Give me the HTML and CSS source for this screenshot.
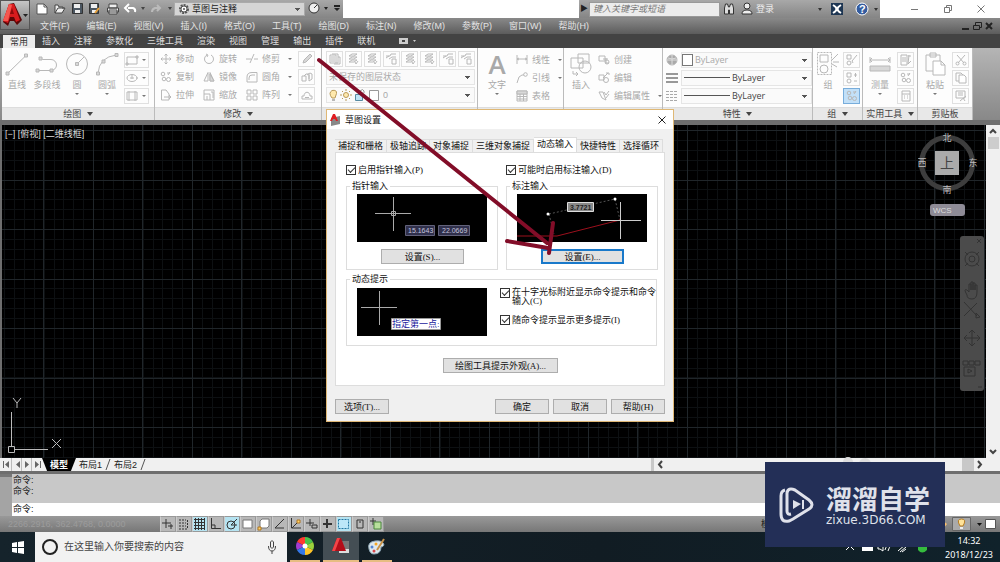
FILE: index.html
```html
<!DOCTYPE html>
<html lang="zh-CN">
<head>
<meta charset="utf-8">
<title>草图设置</title>
<link rel="stylesheet" href="styles.css">
</head>
<body>
<svg class="sprite" aria-hidden="true">
  <symbol id="line" viewBox="0 0 24 24"><path d="M2.500 21.500L21 3.500"/><path class="node" d="M1 20h3v3H1zM19.500 2h3v3h-3z"/></symbol>
  <symbol id="pline" viewBox="0 0 24 24"><path d="M3 18.500H16a5.500 5.500 0 0 0 0-11H8L5 6"/><path class="node" d="M1 17h3v3H1zM15 17h3v3h-3zM4 5h3v3H4z"/></symbol>
  <symbol id="circle" viewBox="0 0 24 24"><circle cx="12" cy="12" r="10.500"/><path d="M12 12l7-7"/><path class="node" d="M10.500 10.500h3v3h-3z"/></symbol>
  <symbol id="arc" viewBox="0 0 24 24"><path d="M3 21.500Q4 5 21.500 3"/><path class="node" d="M1.500 20h3v3h-3zM7 8h3v3H7zM20 1.500h3v3h-3z"/></symbol>
  <symbol id="rect" viewBox="0 0 14 12"><path d="M2 3h10v7H2z"/><path class="node" d="M1 9h2v2H1zM11 2h2v2h-2z"/></symbol>
  <symbol id="ellipse" viewBox="0 0 14 12"><ellipse cx="7" cy="6" rx="5" ry="3.500"/><path d="M7 3v4M5 6h4M12 5v2"/></symbol>
  <symbol id="hatch" viewBox="0 0 14 12"><path d="M2 2h10v8H2zM4 1v10M10 1v10"/></symbol>
  <symbol id="move" viewBox="0 0 12 12"><path d="M6 1v10M1 6h10M4.500 2.500L6 1l1.500 1.500M4.500 9.500L6 11l1.500-1.500M2.500 4.500L1 6l1.500 1.500M9.500 4.500L11 6 9.500 7.500"/></symbol>
  <symbol id="rotate" viewBox="0 0 12 12"><path d="M4 2a4.500 4.500 0 1 0 4 0M3 1l2 1-1 2"/></symbol>
  <symbol id="trim" viewBox="0 0 12 12"><path d="M0 6h5M8 6h4M8 1L4 10"/></symbol>
  <symbol id="copy" viewBox="0 0 12 12"><circle cx="3" cy="3" r="1.800"/><circle cx="8.500" cy="8.500" r="2"/><circle cx="4" cy="8" r="1.800"/><path d="M7 2l3 0M8 4l2-3"/></symbol>
  <symbol id="mirror" viewBox="0 0 12 12"><path d="M5 1.500V10H1zM7 1.500V10h4z"/><path class="node" d="M7 3v7h4z"/></symbol>
  <symbol id="fillet" viewBox="0 0 12 12"><path d="M1 11V6q0-4.500 5-4.500h5V11z"/><path d="M3 9V7q0-3 3-3h3"/></symbol>
  <symbol id="stretch" viewBox="0 0 12 12"><path d="M1.500 1h4.500l3 4v6H1.500zM4 8h7M9 6l2 2-2 2"/></symbol>
  <symbol id="scale" viewBox="0 0 12 12"><path d="M1 1h10v10H1zM1 5h6v6M4 7v4M8 3h2v6"/></symbol>
  <symbol id="array" viewBox="0 0 12 12"><path d="M1 1h4v4H1zM7 1h4v4H7zM1 7h4v4H1zM7 7h4v4H7z"/></symbol>
  <symbol id="erase" viewBox="0 0 12 12"><path class="node" d="M2 10l1-3 6-6 2 2-6 6-3 1z"/></symbol>
  <symbol id="explode" viewBox="0 0 12 12"><path d="M1 5h4v5H1zM6 4l3-2 2 1v5L8 10M3 5l2-2h3v5M8 4v6"/></symbol>
  <symbol id="offset" viewBox="0 0 12 12"><path d="M1 10V7h2c0-5 6-5 6 0h2v3zM4 8.500h4"/></symbol>
  <symbol id="layers" viewBox="0 0 12 12"><path d="M1 2h6v8H1zM3 1h6v9H7M2 4h4M2 6h4M2 8h4M9 4h2v7H5"/></symbol>
  <symbol id="layerb" viewBox="0 0 12 12"><path d="M2 3l3-2h5L7 3zM2 6l3-2h5L7 6zM2 9l3-2h5L7 9zM8 9l1 2 2-3"/></symbol>
  <symbol id="layerc" viewBox="0 0 12 12"><path d="M1 3h4l1-2h5M4 6l3-2h4M7 6v5h4V6zM1 5l3-2"/></symbol>
  <symbol id="dim" viewBox="0 0 12 12"><path d="M1 1v9M11 1v9M1 5h10M3 4L1 5l2 1M9 4l2 1-2 1"/></symbol>
  <symbol id="leader" viewBox="0 0 12 12"><path d="M1 11L3 5l3-2h2"/><circle cx="9.500" cy="2.500" r="1.800"/></symbol>
  <symbol id="table" viewBox="0 0 12 12"><path d="M1 1h10v10H1zM1 4h10M1 6.500h10M1 9h10M4 4v7M7.500 4v7"/><path class="node" d="M1 1h10v3H1z"/></symbol>
  <symbol id="insert" viewBox="0 0 24 24"><path d="M2 6h12v10H2zM9 2h11v9H9z"/><circle cx="16" cy="15" r="6"/><path d="M4 19v3h5M7 20l2 2-2 2"/></symbol>
  <symbol id="create" viewBox="0 0 12 12"><path d="M1 2h6v5H1zM5 5h5M8 9V4M7 9h4"/><circle cx="9" cy="8" r="2"/></symbol>
  <symbol id="edit" viewBox="0 0 12 12"><path d="M1 3h5v5H1zM5 6l5-5M8 1h3v2"/><circle cx="8" cy="8" r="2.500"/></symbol>
  <symbol id="attr" viewBox="0 0 12 12"><path d="M1 2h4l3 8-4-2zM6 2l2 3 3-4M8 8l3-4"/></symbol>
  <symbol id="group" viewBox="0 0 24 26"><path stroke-dasharray="2 1" d="M1.500 1.500h14v22h-14z"/><path d="M4 4h8v7H4zM16 9l6-6M17 11h6M16 13l5 3"/><circle cx="8" cy="18" r="4"/></symbol>
  <symbol id="grpedit" viewBox="0 0 12 12"><path d="M1 1h4v4H1zM6 7l5-6M6 7l1 2"/><circle cx="3" cy="9" r="2"/></symbol>
  <symbol id="grpadd" viewBox="0 0 12 12"><path d="M1 1h4v4H1zM8 3h3M9.500 1v4M8 9h3"/><circle cx="3" cy="9" r="2"/></symbol>
  <symbol id="measure" viewBox="0 0 24 24"><path d="M2 5v6M22 5v6M2 8h20M4 6L2 8l2 2M20 6l2 2-2 2"/><path class="node" d="M2 14h20v5H2z"/></symbol>
  <symbol id="select" viewBox="0 0 12 12"><path d="M1 1h6v10H1zM3 3v5M5 3v5M8 2h3M9 1l-1 9 3-3"/></symbol>
  <symbol id="calc" viewBox="0 0 12 12"><path d="M2 1h8v10H2zM2 4h8M4 6h1M7 6h1M4 8h1M7 8h1"/></symbol>
  <symbol id="paste" viewBox="0 0 24 24"><path d="M3 3h14v16H3zM7 1h6v4H7z"/><path class="paper" d="M10 9h8l4 4v10H10z"/><path d="M18 9v4h4"/></symbol>
  <symbol id="cut" viewBox="0 0 12 12"><path d="M2 1l7 8M10 1L3 9M6 5"/><circle cx="2.500" cy="9.500" r="1.500"/><circle cx="9.500" cy="9.500" r="1.500"/></symbol>
  <symbol id="pages" viewBox="0 0 12 12"><path d="M1 1h5l2 2v6H1z"/><path class="paper" d="M4 3h5l2 2v6H4z"/></symbol>
  <symbol id="match" viewBox="0 0 12 12"><path d="M1 1h9v7H1zM3 3h5M3 5h5M5 11l6-5M8 8l2 3"/></symbol>
</svg>

<div class="app">
  <header class="header">
    <button class="app-button" aria-label="应用程序菜单">
      <svg width="28" height="28" viewBox="0 0 28 28"><path fill="#5d0707" d="M2 21L8 3l5-1 8 17-5 5-3-4H9l-2 5z"/><path fill="#d81b1e" d="M2 20L8 3h5l6 16-4 2-2-5H9l-2 6z"/><path fill="#f5564e" d="M2 20L8 3l3 1-4 16z"/><path fill="#8f0b0d" d="M9 13l2-6 2 6z"/><path fill="#222" d="M22 13h5l-2.500 3z"/></svg>
    </button>
    <div class="titlebar">
      <div class="quick">
        <svg class="quick-icons" width="144" height="18" viewBox="0 0 144 18" aria-hidden="true">
          <path fill="#fff" stroke="#555" d="M7 4h7l3 3v7H7z"/><path fill="none" stroke="#555" d="M14 4v3h3"/>
          <path fill="#eee" stroke="#444" d="M25 13V5h3l1 2h4v2M25 13l3-5h7l-3 5z"/>
          <path fill="#4b5661" stroke="#333" d="M42.500 3.500h10v10h-10z"/><path fill="#eee" d="M44 4h6v4h-6zM45 10h5v3h-5z"/>
          <path fill="#4b5661" stroke="#333" d="M59.500 3.500h9v10h-9z"/><path fill="#eee" d="M61 4h6v4h-6zM62 10h4v3h-4z"/><path stroke="#e8a13a" stroke-width="2" d="M65 13l4-5"/>
          <path fill="#eee" stroke="#444" d="M79 4h8v4h-8zM77.500 8h11v4h-11zM79 10h8v4h-8z"/>
          <path fill="none" stroke="#fff" stroke-width="2" d="M98 8h5q3 1 2 4M99 4l-4 4 4 4"/>
          <path fill="#444" d="M111 7h4l-2 3z"/>
          <path fill="none" stroke="#bbb" stroke-width="2" d="M129 8h-4q-3 1-3 4M127 5l3 3-3 3"/>
          <path fill="#444" d="M138 7h4l-2 3z"/>
        </svg>
        <div class="workspace">
          <svg width="12" height="12" viewBox="0 0 12 12"><circle cx="6" cy="6" r="4" fill="none" stroke="#555" stroke-width="2" stroke-dasharray="2 1"/><circle cx="6" cy="6" r="3" fill="#fff" stroke="#555"/><circle cx="6" cy="6" r="1" fill="#555"/></svg>
          <select aria-label="工作空间"><option>草图与注释</option></select>
        </div>
        <svg width="38" height="18" viewBox="0 0 38 18"><circle cx="9" cy="8" r="5" fill="#eee" stroke="#333"/><path stroke="#333" d="M9 8l3-3"/><path fill="#222" d="M19 7h4l-2 3zM29 5h6v2h-6zM29 8h6l-3 3z"/></svg>
      </div>
      <div class="title-space"></div>
      <div class="info">
        <span class="info-arrow">▶</span>
        <input class="info-search" type="text" placeholder="键入关键字或短语" aria-label="搜索">
        <svg width="36" height="18" viewBox="0 0 36 18"><path fill="#ddd" stroke="#333" d="M4.500 14V8l1-4h2l1 3h1l1-3h2l1 4v6h-4v-4h-1v4z"/><circle cx="27" cy="6" r="3" fill="#eee" stroke="#333"/><path fill="#eee" stroke="#333" d="M22 14q0-4 5-4t5 4z"/></svg>
        <a class="login" href="#">登录</a>
        <svg class="info-end" width="62" height="18" viewBox="0 0 62 18"><path fill="#333" d="M0 8h4l-2 3zM56 8h4l-2 3z"/><path fill="#1e3653" d="M13 3h12v12H13z"/><path fill="none" stroke="#fff" stroke-width="2" d="M15 5q7 4 0 8M23 5q-7 4 0 8"/><circle cx="44" cy="9" r="6" fill="#345c9f" stroke="#fff"/><text x="41" y="13" fill="#fff" font-family="Liberation Sans" font-size="11" font-weight="bold">?</text></svg>
      </div>
      <div class="window-controls">
        <button aria-label="最小化"><svg width="10" height="10"><path d="M2 5.500h7"/></svg></button>
        <button aria-label="还原"><svg width="10" height="10"><path d="M1.500 3.500h5v5h-5zM3.500 3V1.500h5v5H7"/></svg></button>
        <button aria-label="关闭"><svg width="10" height="10"><path d="M1.500 1.500l7 7M8.500 1.500l-7 7"/></svg></button>
      </div>
    </div>
    <nav class="menubar">
      <button>文件(F)</button><button>编辑(E)</button><button>视图(V)</button><button>插入(I)</button><button>格式(O)</button><button>工具(T)</button><button>绘图(D)</button><button>标注(N)</button><button>修改(M)</button><button>参数(P)</button><button>窗口(W)</button><button>帮助(H)</button>
      <svg class="doc-controls" width="36" height="12" viewBox="0 0 36 12"><path stroke-width="2" d="M2 9h7M26 3l6 6M32 3l-6 6"/><path d="M13.500 5.500h6v4h-6zM15.500 5V2.500h6v5H20"/></svg>
    </nav>
  </header>

  <nav class="ribbon-tabs">
    <button class="active">常用</button><button>插入</button><button>注释</button><button>参数化</button><button>三维工具</button><button>渲染</button><button>视图</button><button>管理</button><button>输出</button><button>插件</button><button>联机</button>
    <svg width="22" height="12" viewBox="0 0 22 12"><path fill="#ccc" d="M3 3h9v6H3zM17 5h3l-1.500 2z"/><path fill="#444" d="M6 5h3v2H6z"/></svg>
  </nav>

  <main class="ribbon">
    <section class="panel">
      <div class="panel-body">
        <button class="big"><svg><use href="#line"/></svg>直线</button>
        <button class="big"><svg><use href="#pline"/></svg>多段线</button>
        <button class="big"><svg><use href="#circle"/></svg>圆<i class="caret"></i></button>
        <button class="big"><svg><use href="#arc"/></svg>圆弧<i class="caret"></i></button>
        <div class="stack split">
          <button aria-label="矩形"><svg><use href="#rect"/></svg><i class="caret"></i></button>
          <button aria-label="椭圆"><svg><use href="#ellipse"/></svg><i class="caret"></i></button>
          <button aria-label="图案填充"><svg><use href="#hatch"/></svg><i class="caret"></i></button>
        </div>
      </div>
      <h2>绘图 <i class="drop"></i></h2>
    </section>
    <section class="panel">
      <div class="panel-body modify">
        <button class="cmd"><svg><use href="#move"/></svg>移动</button><button class="cmd"><svg><use href="#rotate"/></svg>旋转</button><button class="cmd"><svg><use href="#trim"/></svg>修剪<i class="caret"></i></button><button class="tool" aria-label="删除"><svg><use href="#erase"/></svg></button>
        <button class="cmd"><svg><use href="#copy"/></svg>复制</button><button class="cmd"><svg><use href="#mirror"/></svg>镜像</button><button class="cmd"><svg><use href="#fillet"/></svg>圆角<i class="caret"></i></button><button class="tool" aria-label="分解"><svg><use href="#explode"/></svg></button>
        <button class="cmd"><svg><use href="#stretch"/></svg>拉伸</button><button class="cmd"><svg><use href="#scale"/></svg>缩放</button><button class="cmd"><svg><use href="#array"/></svg>阵列<i class="caret"></i></button><button class="tool" aria-label="偏移"><svg><use href="#offset"/></svg></button>
      </div>
      <h2>修改 <i class="drop"></i></h2>
    </section>
    <section class="panel">
      <div class="panel-body layer">
        <div class="layer-tools">
          <button class="tool" aria-label="图层特性"><svg><use href="#layers"/></svg></button><button class="tool" aria-label="置为当前"><svg><use href="#layerb"/></svg></button><button class="tool" aria-label="匹配图层"><svg><use href="#layerb"/></svg></button><button class="tool" aria-label="上一个图层"><svg><use href="#layerc"/></svg></button><button class="tool" aria-label="隔离"><svg><use href="#layerb"/></svg></button><button class="tool" aria-label="取消隔离"><svg><use href="#layerb"/></svg></button><button class="tool" aria-label="冻结"><svg><use href="#layerc"/></svg></button><button class="tool" aria-label="关闭图层"><svg><use href="#layerc"/></svg></button>
        </div>
        <div class="combo"><select aria-label="图层状态"><option>未保存的图层状态</option></select></div>
        <div class="combo"><svg width="54" height="14" viewBox="0 0 54 14"><path fill="#ffe9ad" stroke="#b89a5a" d="M5 10Q1 5 5 2.500q5-1 4.500 3L8 10z"/><path stroke="#777" d="M5 12h3"/><circle cx="19" cy="7" r="2.500" fill="#ffe9ad" stroke="#b89a5a"/><path stroke="#b89a5a" d="M19 1v2M19 11v2M13 7h2M23 7h2M15 3l1 1M22 10l1 1M15 11l1-1M22 4l1-1"/><path fill="#bfe3f5" stroke="#578ba3" d="M28.500 6.500h7v6h-7z"/><path fill="none" stroke="#999" d="M33 6V3q3-3 4 0v2"/><path fill="#fff" stroke="#999" d="M42.500 2.500h9v10h-9z"/></svg><select aria-label="图层"><option>0</option></select></div>
      </div>
      <h2>图层 <i class="drop"></i></h2>
    </section>
    <section class="panel">
      <div class="panel-body">
        <button class="big text-button"><b>A</b>文字<i class="caret"></i></button>
        <div class="stack">
          <button class="cmd"><svg><use href="#dim"/></svg>线性<i class="caret"></i></button>
          <button class="cmd"><svg><use href="#leader"/></svg>引线<i class="caret"></i></button>
          <button class="cmd"><svg><use href="#table"/></svg>表格</button>
        </div>
      </div>
      <h2>注释 <i class="drop"></i></h2>
    </section>
    <section class="panel">
      <div class="panel-body">
        <button class="big block-button"><svg><use href="#insert"/></svg>插入</button>
        <div class="stack">
          <button class="cmd"><svg><use href="#create"/></svg>创建</button>
          <button class="cmd"><svg><use href="#edit"/></svg>编辑</button>
          <button class="cmd"><svg><use href="#attr"/></svg>编辑属性<i class="caret"></i></button>
        </div>
      </div>
      <h2>块 <i class="drop"></i></h2>
    </section>
    <section class="panel">
      <div class="panel-body props">
        <svg width="12" height="12" viewBox="0 0 12 12"><circle cx="6" cy="6" r="5" fill="#aaa"/><path stroke="#ddd" fill="none" d="M1 6h10M6 1v10M2 4q4 2 8 0"/></svg>
        <div class="combo"><i class="swatch"></i><select aria-label="颜色"><option>ByLayer</option></select></div>
        <svg width="12" height="12"><path stroke="#999" stroke-width="2" d="M0 2h12M0 6h12M0 10h12"/></svg>
        <div class="combo dark"><i class="rule"></i><select aria-label="线宽"><option>ByLayer</option></select></div>
        <svg width="12" height="12"><path stroke="#aaa" stroke-dasharray="3 1" d="M0 1.500h12M0 4.500h12M0 7.500h12M0 10.500h12"/></svg>
        <div class="combo dark"><i class="rule"></i><select aria-label="线型"><option>ByLayer</option></select></div>
      </div>
      <h2>特性 <i class="drop"></i></h2>
    </section>
    <section class="panel">
      <div class="panel-body">
        <button class="big"><svg><use href="#group"/></svg>组</button>
        <div class="stack">
          <button class="tool" aria-label="编辑组"><svg><use href="#grpedit"/></svg></button>
          <button class="tool" aria-label="添加"><svg><use href="#grpadd"/></svg></button>
          <button class="tool on" aria-label="组选择"><svg><use href="#copy"/></svg></button>
        </div>
      </div>
      <h2>组 <i class="drop"></i></h2>
    </section>
    <section class="panel">
      <div class="panel-body">
        <button class="big util-button"><svg><use href="#measure"/></svg>测量<i class="caret"></i></button>
        <div class="stack">
          <button class="tool" aria-label="快速选择"><svg><use href="#select"/></svg></button>
          <button class="tool" aria-label="全部选择"><svg><use href="#copy"/></svg></button>
          <button class="tool" aria-label="计算器"><svg><use href="#calc"/></svg></button>
        </div>
      </div>
      <h2>实用工具 <i class="drop"></i></h2>
    </section>
    <section class="panel">
      <div class="panel-body">
        <button class="big util-button"><svg><use href="#paste"/></svg>粘贴<i class="caret"></i></button>
        <div class="stack">
          <button class="tool" aria-label="剪切"><svg><use href="#cut"/></svg></button>
          <button class="tool" aria-label="复制"><svg><use href="#pages"/></svg></button>
          <button class="tool" aria-label="特性匹配"><svg><use href="#match"/></svg></button>
        </div>
      </div>
      <h2>剪贴板</h2>
    </section>
  </main>

  <section class="workarea">
    <div class="canvas">
      <svg class="grid" aria-hidden="true" shape-rendering="crispEdges">
        <g stroke="#0d1012" stroke-dasharray="1 8.900"><path stroke-width="1200" d="M2 0H4000"/><path stroke-width="8000" d="M0 5V2000"/></g>
        <g stroke="#20262a" stroke-dasharray="1 48.500"><path stroke-width="1200" d="M41 0H4000"/><path stroke-width="8000" d="M0 5V2000"/></g>
      </svg>
      <p class="view-label">[−] [俯视] [二维线框]</p>
      <svg class="ucs" width="66" height="64" viewBox="0 0 66 64"><path d="M9.500 18v35M12 55.500h34M6.500 52.500h6v6h-6zM11 4l4 5 4-5M15 9v5M50 45l9 9M59 45l-9 9"/></svg>
      <svg class="compass" width="68" height="100" viewBox="0 0 68 100">
        <circle cx="29" cy="38" r="25.500" fill="none" stroke="#3d3d3d" stroke-width="5"/>
        <path fill="#aaa" d="M17 26h24v24H17z"/>
        <g text-anchor="middle" font-size="9" fill="#bbb"><text x="29" y="16">北</text><text x="29" y="68">南</text><text x="4" y="41">西</text><text x="55" y="41">东</text><text x="29" y="43" font-size="14" fill="#444">上</text></g>
        <rect x="12" y="79" width="35" height="12" rx="3" fill="#8e8b96"/><text x="15" y="88" font-size="8" fill="#ddd">WCS</text>
      </svg>
      <svg class="navbar" width="24" height="155" viewBox="0 0 24 155"><rect width="24" height="155" rx="3" fill="#4b4b4b"/><g fill="none" stroke="#333"><path d="M17 3l4 4M21 3l-4 4M18 151h4"/><circle cx="12" cy="23" r="7"/><circle cx="12" cy="23" r="3"/><path d="M5 16l3 3M19 16l-3 3M5 30l3-3M19 30l-3-3M7 59q-4-7 0-5l2 2v-8h2v6-8h2v8-7h2v7-5h2v7q0 7-5 7t-5-4zM4 66l13 14M17 67L4 80M16 77l4 4-4 1zM12 94v16M4 102h16M9 97l3-3 3 3M9 107l3 3 3-3M7 99l-3 3 3 3M17 99l3 3-3 3M3 125h5v4H3zM9 125h5v4H9zM15 125h5v4h-5zM4 131h11v9H4zM8 133v4l4-2z"/></g></svg>
    </div>
    <div class="vscroll"><svg width="12" height="12"><path d="M3 8l3-3 3 3"/></svg><i></i><svg width="12" height="12"><path d="M3 4l3 3 3-3"/></svg></div>
  </section>

  <div class="layouts">
    <svg class="layout-nav" width="42" height="13"><path fill="#666" d="M3 3h1v7H3zM9 3v7L5 6.500zM20 3v7l-4-3.500zM25 3v7l4-3.500zM35 3v7l4-3.500zM40 3h1v7h-1z"/><path stroke="#bbb" d="M11.500 0v13M21.500 0v13M31.500 0v13"/></svg>
    <button class="model">模型</button>
    <button>布局1</button><svg width="6" height="13"><path stroke="#555" d="M1 12L5 1"/></svg>
    <button>布局2</button><svg width="6" height="13"><path stroke="#555" d="M1 12L5 1"/></svg>
    <div class="hscroll"><i></i><svg width="12" height="13"><path d="M8 3L5 6.500 8 10"/></svg><span></span><i class="thumb"></i><svg width="12" height="13"><path d="M4 3l3 3.500L4 10"/></svg></div>
  </div>

  <section class="command">
    <div class="grip"></div>
    <div class="command-main">
      <p>命令:<br>命令:</p>
      <label class="prompt">命令:<input type="text" aria-label="命令"></label>
    </div>
  </section>

  <footer class="status">
    <span class="coords">2266.2916, 362.4768, 0.0000</span>
    <div class="toggles">
      <button aria-label="推断约束"><svg><path d="M5 2v9M1 6h9M7 9h5M10 7v5"/></svg></button>
      <button aria-label="捕捉"><svg><path stroke-dasharray="2 1" d="M2 3h7M2 6h7M2 9h7M2 12h9M10.500 3v8"/></svg></button>
      <button class="lit" aria-label="栅格"><svg><path d="M1 2.500h11M1 5.500h11M1 8.500h11M1 11.500h11M2.500 1v12M5.500 1v12M8.500 1v12M11.500 1v12"/></svg></button>
      <button aria-label="正交"><svg><path d="M2.500 1v10.500H12M3 8h3v3"/></svg></button>
      <button class="lit" aria-label="极轴"><svg><circle cx="6" cy="8" r="4"/><path d="M6 8l6-6M6 8h6"/></svg></button>
      <button aria-label="对象捕捉"><svg><path class="white" d="M2 3h9v8H2z"/></svg></button>
      <button aria-label="三维对象捕捉"><svg><path class="white" d="M3 4l2-2h7v7l-2 2H3z"/><path class="orange" d="M1 10h3v3H1z"/></svg></button>
      <button aria-label="对象追踪"><svg><path d="M11 2L2 11h9"/></svg></button>
      <button aria-label="动态坐标"><svg><path d="M2.500 1v10H12M3 11l6-6"/><path class="orange" d="M8 3h3v3H8z"/></svg></button>
      <button aria-label="动态输入"><svg><path d="M5 2v7M1 6h8M7 8h5v3H7z"/></svg></button>
      <button aria-label="线宽"><svg><path stroke-width="2" d="M6 2v9M2 7h9"/></svg></button>
      <button class="lit" aria-label="透明度"><svg><path fill="#bce7f8" stroke="#2277a2" stroke-dasharray="2 1" d="M1.500 2.500h10v9h-10z"/></svg></button>
      <button aria-label="快捷特性"><svg><path d="M4 3h6v8H4zM6 5h2"/></svg></button>
      <button aria-label="选择循环"><svg><path d="M4 1v7M1 4h6"/><path fill="#b8df9c" stroke="#4a873d" d="M5 5h7v7H5z"/></svg></button>
    </div>
    <span class="space-label">模型</span>
    <div class="status-end"><svg width="60" height="16" viewBox="0 0 60 16"><path fill="#ffc16b" d="M2 4l5 4-4 5z"/><path fill="#aaa" stroke="#666" d="M12.500 1.500h18v13h-18z"/><path fill="#ffe39a" stroke="#b77d22" d="M20 10q-4-7 1.500-7T23 10z"/><path stroke="#eee" stroke-width="2" d="M20 12h3"/><path fill="#111" d="M37 7h5l-2.500 3z"/><path fill="#fff" stroke="#555" d="M45.500 3.500h10v9h-10z"/></svg></div>
  </footer>

  <footer class="taskbar">
    <button class="start" aria-label="开始"><svg width="14" height="14"><path fill="#fff" d="M1 3l5-1v5H1zM7 2l6-1v6H7zM1 8h5v5l-5-1zM7 8h6v6l-6-1z"/></svg></button>
    <div class="search"><i></i><input type="text" placeholder="在这里输入你要搜索的内容" aria-label="搜索"><svg width="10" height="16"><path fill="none" stroke="#444" d="M3.500 3q1.500-3 3 0v5q-1.500 3-3 0zM1.500 7q0 5 3.500 5t3.500-5M5 12v3"/></svg></div>
    <button class="task" aria-label="浏览器"><svg width="18" height="18" viewBox="0 0 18 18"><path fill="#ff3b30" d="M9 9V0a9 9 0 0 0-8 5z"/><path fill="#a43bd2" d="M9 9L1 5a9 9 0 0 0 0 8z"/><path fill="#3478e8" d="M9 9l-8 4a9 9 0 0 0 8 5z"/><path fill="#ffc529" d="M9 9v9a9 9 0 0 0 8-5z"/><path fill="#4cc04a" d="M9 9V0a9 9 0 0 1 8 5z"/><path fill="#9bd23c" d="M9 9l8-4a9 9 0 0 1 0 8z"/><circle cx="9" cy="9" r="2.500" fill="#fff"/></svg></button>
    <button class="task current" aria-label="AutoCAD"><svg width="20" height="18" viewBox="0 0 20 18"><path fill="#ddd" d="M8 8h10v8H8z"/><path fill="#777" d="M11 4h7v8h-7z"/><path fill="#b30d18" d="M1 14L6 1h4l5 13H1z"/><path fill="#f24548" d="M1 14L6 1h3L4 14z"/></svg></button>
    <button class="task" aria-label="画图"><svg width="20" height="18" viewBox="0 0 20 18"><path fill="#dce8ee" stroke="#8da6b4" d="M2 12Q0 5 8 4t9 4q-1 2-3 2 0 7-7 7-4 0-5-5z"/><circle cx="5" cy="10" r="1.500" fill="#5184d4"/><circle cx="9" cy="7" r="1.500" fill="#f5a623"/><circle cx="7" cy="14" r="1.500" fill="#d6464a"/><path stroke="#c79147" stroke-width="2" d="M10 13l7-11"/></svg></button>
    <svg class="tray" width="96" height="16" viewBox="0 0 96 16"><path fill="none" stroke="#fff" d="M4 10l4-4 4 4M38 6l3-2v7l-3-2h-2V6zM43 5q2 2 0 5M46 4q3 3 0 7M56 11l8-7M58 12l6-5M60 12l4-3"/><path fill="#fff" d="M20 5h11v6H20z"/><path fill="#35bd3e" d="M76 3h9v7q-5 5-9 0z"/></svg>
    <div class="clock"><time>14:32</time><time>2018/12/23</time></div>
  </footer>

  <div class="dialog" role="dialog" aria-labelledby="dialog-title">
    <header class="dialog-title"><svg width="12" height="12" viewBox="0 0 12 12"><path fill="#888" d="M2 4l9-2v8l-9 2z"/><path fill="#e01c22" d="M1 7L4 0h2l3 7H7L6 5H4L3 7z"/></svg><h1 id="dialog-title">草图设置</h1><button aria-label="关闭"><svg width="10" height="10"><path d="M1.500 1.500l7 7M8.500 1.500l-7 7"/></svg></button></header>
    <div class="dialog-body">
      <div class="tabs" role="tablist"><button>捕捉和栅格</button><button>极轴追踪</button><button>对象捕捉</button><button>三维对象捕捉</button><button class="selected">动态输入</button><button>快捷特性</button><button>选择循环</button></div>
      <div class="page">
        <div class="columns">
          <div>
            <label class="check"><input type="checkbox" checked>启用指针输入(P)</label>
            <fieldset><legend>指针输入</legend>
              <svg class="preview" width="130" height="48" viewBox="0 0 130 48"><path fill="#000" d="M0 0h130v48H0z"/><path fill="none" stroke="#aaa" d="M36.500 3v34M18 19.500h36M34.500 17.500h4v4h-4z"/><path fill="#30304c" stroke="#62627a" d="M48.500 31.500h29v10h-29zM81.500 31.500h31v10h-31z"/><g font-family="Liberation Sans" font-size="7" fill="#c4c4dc"><text x="51" y="39">15.1643</text><text x="85" y="39">22.0669</text></g></svg>
              <button class="btn wide">设置(S)...</button>
            </fieldset>
          </div>
          <div>
            <label class="check"><input type="checkbox" checked>可能时启用标注输入(D)</label>
            <fieldset><legend>标注输入</legend>
              <svg class="preview" width="130" height="48" viewBox="0 0 130 48"><path fill="#000" d="M0 0h130v48H0z"/><path fill="none" stroke="#555" stroke-dasharray="2 2" d="M32 20l66-15 5 21M32 20l5 20"/><path fill="none" stroke="#9c101d" d="M0 42h40l63-16"/><path stroke="#ccc" d="M103.500 8v37M84 26.500h40"/><circle cx="31" cy="20" r="1.500" fill="#fff"/><circle cx="98" cy="5" r="1.500" fill="#fff"/><path fill="#888" stroke="#ddd" d="M50.500 8.500h26v9h-26z"/><text x="53" y="16" font-family="Liberation Sans" font-size="7" font-weight="bold" fill="#222">3.7721</text></svg>
              <button class="btn wide default">设置(E)...</button>
            </fieldset>
          </div>
        </div>
        <fieldset class="prompts"><legend>动态提示</legend>
          <div class="prompt-row">
            <svg class="preview" width="130" height="48" viewBox="0 0 130 48"><path fill="#000" d="M0 0h130v48H0z"/><path stroke="#aaa" d="M22.500 3v34M4 19.500h36"/><path fill="#fff" stroke="#999" d="M34.500 30.500h49v11h-49z"/><text x="35" y="39" font-size="9" fill="#1a1a9c">指定第一点:</text></svg>
            <div class="prompt-checks">
              <label class="check"><input type="checkbox" checked><span>在十字光标附近显示命令提示和命令<br>输入(C)</span></label>
              <label class="check"><input type="checkbox" checked>随命令提示显示更多提示(I)</label>
            </div>
          </div>
        </fieldset>
        <button class="btn appearance">绘图工具提示外观(A)...</button>
      </div>
      <div class="dialog-actions"><button class="btn">选项(T)...</button><span></span><button class="btn">确定</button><button class="btn">取消</button><button class="btn">帮助(H)</button></div>
    </div>
  </div>

  <svg class="pointer" width="250" height="210" viewBox="0 0 250 210" aria-hidden="true"><path d="M11 10L239 193M199 191l41 7M245 173l-4 30"/></svg>

  <aside class="brand">
    <svg class="bumps" width="34" height="5" viewBox="0 0 34 5"><circle cx="8" cy="5" r="5"/><circle cx="25" cy="7" r="6"/></svg>
    <svg width="36" height="38" viewBox="0 0 36 38"><path d="M6 4q-4 1-4 6v18q0 9 8 7l4-2 16-10q6-4 0-9L16 4q-7-3-8 3v18q0 4 4 3"/><path class="solid" d="M14 14l8 4-8 5zM23 14h2v9h-2z"/></svg>
    <div><strong>溜溜自学</strong><span>zixue.3D66.COM</span></div>
  </aside>
</div>
</body>
</html>
```

FILE: styles.css
```css
* { box-sizing: border-box; }
body {
  margin: 0;
  font: 9px/12px "Liberation Sans", "Noto Sans CJK SC", sans-serif;
  color: #222;
}
button, input, select { font: inherit; color: inherit; margin: 0; }
button { padding: 0; border: 0; background: none; white-space: nowrap; }
h1, h2, p { margin: 0; font-size: 9px; font-weight: normal; }
svg { display: block; flex: none; fill: none; }
.sprite { position: absolute; width: 0; height: 0; }
.app {
  position: relative;
  display: flex;
  flex-direction: column;
  min-height: 100vh;
  overflow: hidden;
  background: #6e6e6e;
}

/* Title and menus */
.header {
  display: grid;
  grid-template-columns: 30px 1fr;
  grid-template-rows: 18px 16px;
  background: linear-gradient(#8c8c8c 50%, #5c5c5c);
}
.app-button {
  grid-row: 1 / 3;
  height: 30px;
  border: 1px solid #555;
  background: linear-gradient(#c6c6c6, #777);
}
.titlebar { display: flex; background: #fff; }
.quick, .info { display: flex; align-items: center; background: linear-gradient(#a8a8a8, #858585); }
.workspace {
  display: flex;
  align-items: center;
  width: 131px;
  height: 14px;
  padding-left: 3px;
  background: #d5d5d5;
  border: 1px solid #aaa;
}
select {
  appearance: none;
  flex: 1;
  min-width: 0;
  height: 12px;
  border: 0;
  border-radius: 0;
  padding: 0 10px 0 2px;
  background: linear-gradient(#555, #555) right 4px top 5px / 5px 1px no-repeat,
    linear-gradient(#555, #555) right 5px top 6px / 3px 1px no-repeat,
    linear-gradient(#555, #555) right 6px top 7px / 1px 1px no-repeat;
}
.title-space { flex: 1; }
.info { width: 301px; }
.info-arrow { width: 10px; font-size: 8px; text-align: center; }
.info-search {
  width: 131px;
  height: 15px;
  padding: 0 3px;
  border: 1px solid #999;
  background: #ececec;
  font-style: italic;
}
.info-search::placeholder { color: #777; opacity: 1; }
.login { color: #eee; text-decoration: none; }
.info-end { margin-left: auto; }
.window-controls { display: flex; width: 120px; padding: 0 14px 0 29px; justify-content: space-between; align-items: center; }
.window-controls svg { stroke: #777; }
.menubar { display: flex; align-items: center; gap: 17px; padding: 0 4px 0 10px; color: #e2e2e2; }
.doc-controls { margin-left: auto; stroke: #222; }
.ribbon-tabs { display: flex; align-items: center; height: 14px; padding-left: 3px; background: #434343; color: #ddd; }
.ribbon-tabs button { padding: 0 7px; height: 13px; }
.ribbon-tabs .active { background: #ececec; color: #333; align-self: flex-end; }
.ribbon-tabs svg { margin-left: 14px; }

/* Ribbon */
.ribbon {
  display: grid;
  grid-template-columns: 153px 167px 156px 86px 99px 150px 50px 55px 55px;
  padding-left: 2px;
  height: 72px;
  background: linear-gradient(#b5b5b5, #888);
}
.panel { display: flex; flex-direction: column; border-right: 1px solid #bbb; background: #fdfdfd; color: #a9a9a9; }
.panel svg { stroke: #b8b8b8; }
.node { fill: #d8d8d8; }
.paper { fill: #fff; }
.panel-body { flex: 1; display: flex; padding-top: 3px; }
.panel h2 { height: 13px; background: #e8e8e8; color: #444; text-align: center; border-top: 1px solid #ddd; }
.caret, .drop { display: inline-block; border: 2px solid transparent; border-top-color: #777; border-bottom: 0; }
.drop { border-width: 4px 3px 0; border-top-color: #444; margin-left: 3px; vertical-align: 1px; }
.big { display: flex; flex-direction: column; align-items: center; width: 30px; height: 50px; }
.big svg { width: 24px; height: 26px; margin-bottom: 2px; }
.big .caret { margin-top: 2px; }
.stack { display: grid; grid-template-rows: repeat(3, 17px); align-items: center; row-gap: 1px; }
.split button { display: flex; align-items: center; width: 25px; height: 16px; margin-left: 2px; border: 1px solid #e0e0e0; }
.split svg { width: 14px; height: 12px; }
.split .caret { margin-left: 3px; }
.cmd { display: flex; align-items: center; gap: 4px; height: 16px; }
.cmd svg, .tool svg { width: 12px; height: 12px; }
.cmd .caret { margin-left: 4px; }
.tool { display: grid; place-items: center; width: 17px; height: 16px; border: 1px solid #e0e0e0; }
.tool.on { background: #c2e0f8; border-color: #78addb; }
.modify { display: grid; grid-template-columns: 43px 43px 52px 17px; grid-template-rows: repeat(3, 17px); row-gap: 1px; padding-left: 5px; }
.layer { display: grid; grid-template-rows: repeat(3, 17px); row-gap: 1px; padding-left: 4px; padding-right: 2px; }
.layer-tools { display: flex; justify-content: space-between; }
.combo { display: flex; align-items: center; height: 16px; border: 1px solid #e5e5e5; background: #fafafa; }
.text-button { width: 38px; }
.text-button b { height: 26px; margin-bottom: 2px; font: 600 26px/26px "Open Sans", sans-serif; }
.block-button, .util-button { width: 34px; }
.props { display: grid; grid-template-columns: 12px 1fr; grid-template-rows: repeat(3, 17px); gap: 1px 3px; align-items: center; padding-left: 3px; font-family: "Open Sans", sans-serif; }
.dark { color: #444; }
.swatch { width: 11px; height: 12px; border: 1px solid #777; background: #fff; }
.rule { width: 46px; margin-left: 2px; border-top: 1px solid #555; }

/* Drawing area */
.workarea { display: flex; flex: 1; margin-top: 5px; padding-left: 2px; }
.canvas { position: relative; flex: 1; overflow: hidden; background: #000; }
.grid { position: absolute; inset: 0; width: 100%; height: 100%; }
.view-label { position: relative; padding: 3px; color: #ddd; }
.ucs { position: absolute; left: 0; bottom: 0; stroke: #bbb; }
.compass { position: absolute; top: 0; right: 0; }
.navbar { position: absolute; top: 111px; right: 2px; }
.vscroll { display: flex; flex-direction: column; width: 14px; background: #f0f0f0; align-items: center; }
.vscroll svg:last-child { margin-top: auto; }
.vscroll svg, .hscroll svg { stroke: #444; stroke-width: 2; }
.vscroll i { width: 11px; height: 12px; background: #cdcdcd; }
.layouts { display: flex; height: 13px; background: #f0f0f0; }
.layouts button { padding: 0 3px; }
.layouts .model { width: 34px; color: #fff; background: #000; font-weight: bold; clip-path: polygon(0 0, 100% 0, 85% 100%, 15% 100%); }
.hscroll { display: flex; width: 349px; margin-left: auto; padding-right: 14px; }
.hscroll i { width: 3px; background: #c8c8c8; }
.hscroll .thumb { width: 12px; }
.hscroll span { flex: 1; }

/* Command line and status */
.command { display: flex; margin-top: 3px; height: 42px; background: #c8c8c8; }
.grip { width: 12px; background: linear-gradient(#777 0 3px, #a4a4a4 3px); }
.command-main { flex: 1; display: flex; flex-direction: column; font-size: 9px; line-height: 11px; }
.command-main p { padding: 1px 0 0 1px; flex: 1; }
.prompt { display: flex; height: 13px; padding-left: 1px; background: #fff; line-height: 13px; }
.prompt input { flex: 1; border: 0; padding: 0; outline: 0; background: none; }
.status { display: flex; align-items: center; height: 16px; background: linear-gradient(#999, #777); }
.coords { width: 160px; padding-left: 8px; color: #9c9c9c; }
.toggles { display: flex; }
.toggles button { width: 16px; height: 16px; border: 1px solid #999; border-left-color: #ccc; background: #b8b8b8; }
.toggles svg { width: 14px; height: 14px; stroke: #333; }
.toggles .lit { background: #b5e3f1; }
.toggles .white { fill: #fff; stroke: #777; }
.toggles .orange { fill: #ffd36a; stroke: #b07720; }
.space-label { margin-left: auto; width: 179px; }
.taskbar { display: flex; height: 30px; background: linear-gradient(90deg, #15232b, #111c23 60%, #10222b); color: #fff; }
.start { display: grid; place-items: center; width: 35px; }
.search { display: flex; align-items: center; width: 252px; padding: 0 10px 0 7px; gap: 6px; background: #f2f2f2; }
.search i { width: 16px; height: 16px; border: 2px solid #222; border-radius: 50%; }
.search input { flex: 1; min-width: 0; border: 0; padding: 0; background: none; font-size: 10px; }
.search input::placeholder { color: #444; opacity: 1; }
.task { display: grid; place-items: center; width: 30px; margin: 0 3px; border-bottom: 2px solid #e7bd82; }
.task.current { width: 36px; margin: 0; background: #444e54; }
.tray { margin: 8px 0 0 auto; }
.clock { width: 62px; font: 9px/14px "Noto Sans", sans-serif; padding-top: 2px; text-align: center; }
.clock time { display: block; }

/* Settings dialog */
.dialog {
  position: absolute;
  top: 109px;
  left: 50%;
  width: 348px;
  margin-left: -174px;
  border: 1px solid #dfb875;
  background: #f0f0f0;
  color: #111;
  font-family: "Liberation Serif", "Noto Sans CJK SC", serif;
}
.dialog-title { display: flex; align-items: center; gap: 4px; height: 19px; padding: 0 6px 0 2px; background: #fff; }
.dialog-title button { margin-left: auto; }
.dialog-title button svg { stroke: #222; }
.dialog-body { padding: 8px 8px 7px; }
.tabs { display: flex; align-items: flex-end; height: 15px; }
.tabs button { height: 13px; padding: 0 3px; border: 1px solid #ddd; border-width: 1px 1px 0 0; }
.tabs .selected { height: 15px; padding: 0 3px 2px; background: #fff; }
.page { padding: 12px 7px 12px 10px; border: 1px solid #ddd; background: #fff; }
.columns { display: grid; grid-template-columns: 1fr 1fr; gap: 8px; }
.check { display: flex; align-items: flex-start; gap: 2px; line-height: 10px; white-space: nowrap; }
.check input {
  appearance: none;
  flex: none;
  width: 10px;
  height: 10px;
  border: 1px solid #333;
}
.check input:checked::after {
  content: "";
  display: block;
  width: 6px;
  height: 3px;
  margin: 1px;
  border: solid #333;
  border-width: 0 0 1px 1px;
  transform: rotate(-45deg);
}
fieldset { min-width: 0; margin: 6px 0 0; padding: 3px 10px 5px; border: 1px solid #ddd; }
legend { margin-left: -7px; padding: 0 2px; line-height: 10px; }
.btn { height: 15px; min-width: 54px; padding: 0 6px; border: 1px solid #adadad; background: #e1e1e1; line-height: 12px; }
.wide { display: block; width: 83px; margin: 7px 0 0 24px; }
.default { outline: 1px solid #1979ca; border-color: #1979ca; outline-offset: -2px; }
.prompts { margin-top: 4px; padding: 4px 10px 9px; }
.prompt-row { display: flex; gap: 13px; }
.prompt-checks { display: grid; gap: 9px; align-content: start; }
.prompt-checks .check:first-child { line-height: 9px; }
.appearance { display: block; width: 115px; margin: 12px auto 0 97px; padding: 0; }
.dialog-actions { display: flex; gap: 4px; padding-top: 13px; }
.dialog-actions span { flex: 1; }

/* Overlays */
.pointer { position: absolute; left: 308px; top: 50px; stroke: #820d28; stroke-width: 4; stroke-linecap: round; pointer-events: none; }
.brand {
  position: absolute;
  right: 55px;
  bottom: 15px;
  display: flex;
  align-items: center;
  gap: 11px;
  width: 180px;
  height: 85px;
  padding-left: 14px;
  background: #232f57;
  color: #dfe1ea;
}
.brand svg { stroke: #dfe1ea; stroke-width: 3; }
.brand .solid { fill: #dfe1ea; stroke: none; }
.brand strong { display: block; font: bold 26px/30px "Noto Sans CJK SC", sans-serif; }
.brand span { display: block; font: 12px/14px "DejaVu Sans", sans-serif; }
.brand .bumps { position: absolute; top: -5px; left: 75px; fill: #ddd; stroke: none; }
```
